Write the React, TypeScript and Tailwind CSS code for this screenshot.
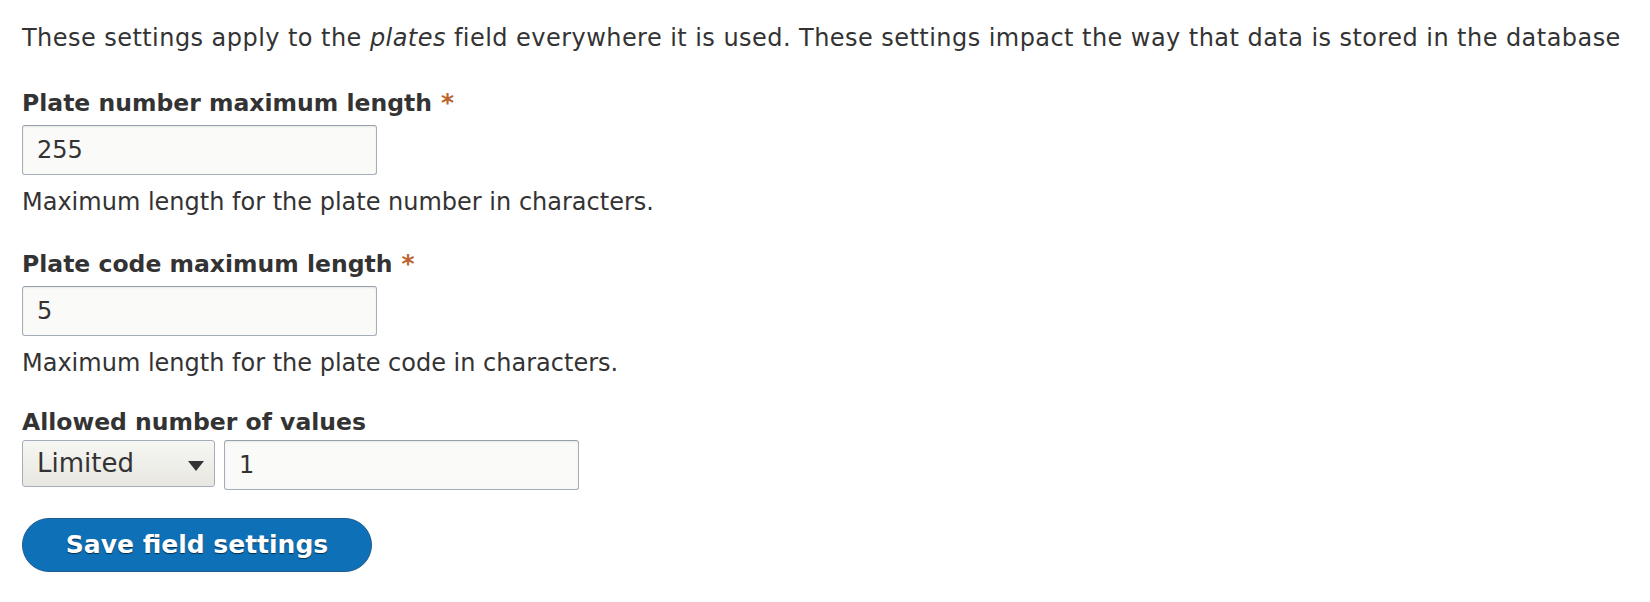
// Field storage settings form (Drupal Seven look)

const FONT = { fontFamily: '"DejaVu Sans", Verdana, sans-serif' };

function Label({ text, required }: { text: string; required?: boolean }) {
  return (
    <label className="block text-[23.5px] leading-[32px] font-bold text-[#333]">
      {text}
      {required && <span className="ml-[9px] text-[25px] text-[#bb6431]">*</span>}
    </label>
  );
}

function TextInput({ value, width }: { value: string; width: string }) {
  return (
    <input
      readOnly
      value={value}
      className={`${width} block h-[50px] rounded-[3px] border border-[#a4adb9] border-t-[#97a1ad] bg-[#fafaf8] px-[14px] text-[24px] leading-[36px] text-[#333] shadow-[inset_0_1px_2px_rgba(0,0,0,0.08)] outline-none`}
      style={FONT}
    />
  );
}

function Description({ text }: { text: string }) {
  return <div className="mt-[9px] text-[24px] leading-[36px] text-[#333]">{text}</div>;
}

export default function App() {
  return (
    <div className="min-h-screen bg-white pl-[22px] pt-[20px] text-[#333]" style={FONT}>
      <p className="text-[24px] leading-[36px] tracking-[0.45px]">
        These settings apply to the <em>plates</em> field everywhere it is used. These settings impact the way that
        data is stored in the database
      </p>

      <div className="mt-[31px]">
        <Label text="Plate number maximum length" required />
        <div className="mt-[6px]">
          <TextInput value="255" width="w-[355px]" />
        </div>
        <Description text="Maximum length for the plate number in characters." />
      </div>

      <div className="mt-[28px]">
        <Label text="Plate code maximum length" required />
        <div className="mt-[6px]">
          <TextInput value="5" width="w-[355px]" />
        </div>
        <Description text="Maximum length for the plate code in characters." />
      </div>

      <div className="mt-[25px]">
        <Label text="Allowed number of values" />
        <div className="mt-[2px] flex items-start gap-[9px]">
          <div className="relative flex h-[47px] w-[193px] items-center rounded-[3px] border border-[#a4adb9] bg-gradient-to-b from-[#f6f6f3] to-[#e8e7e1] pl-[14px] text-[26px] text-[#333]">
            Limited
            <svg className="absolute right-[10px] top-[20px]" width="16" height="10" viewBox="0 0 16 10">
              <path d="M0 0 H16 L8 10 Z" fill="#333" />
            </svg>
          </div>
          <TextInput value="1" width="w-[355px]" />
        </div>
      </div>

      <button
        className="mt-[28px] flex h-[54px] w-[350px] items-center justify-center rounded-full border border-[#1e5c90] bg-[#0e71b8] text-[25px] font-bold text-white [text-shadow:0_1px_1px_rgba(0,0,0,0.6)]"
        style={FONT}
      >
        Save field settings
      </button>
    </div>
  );
}
